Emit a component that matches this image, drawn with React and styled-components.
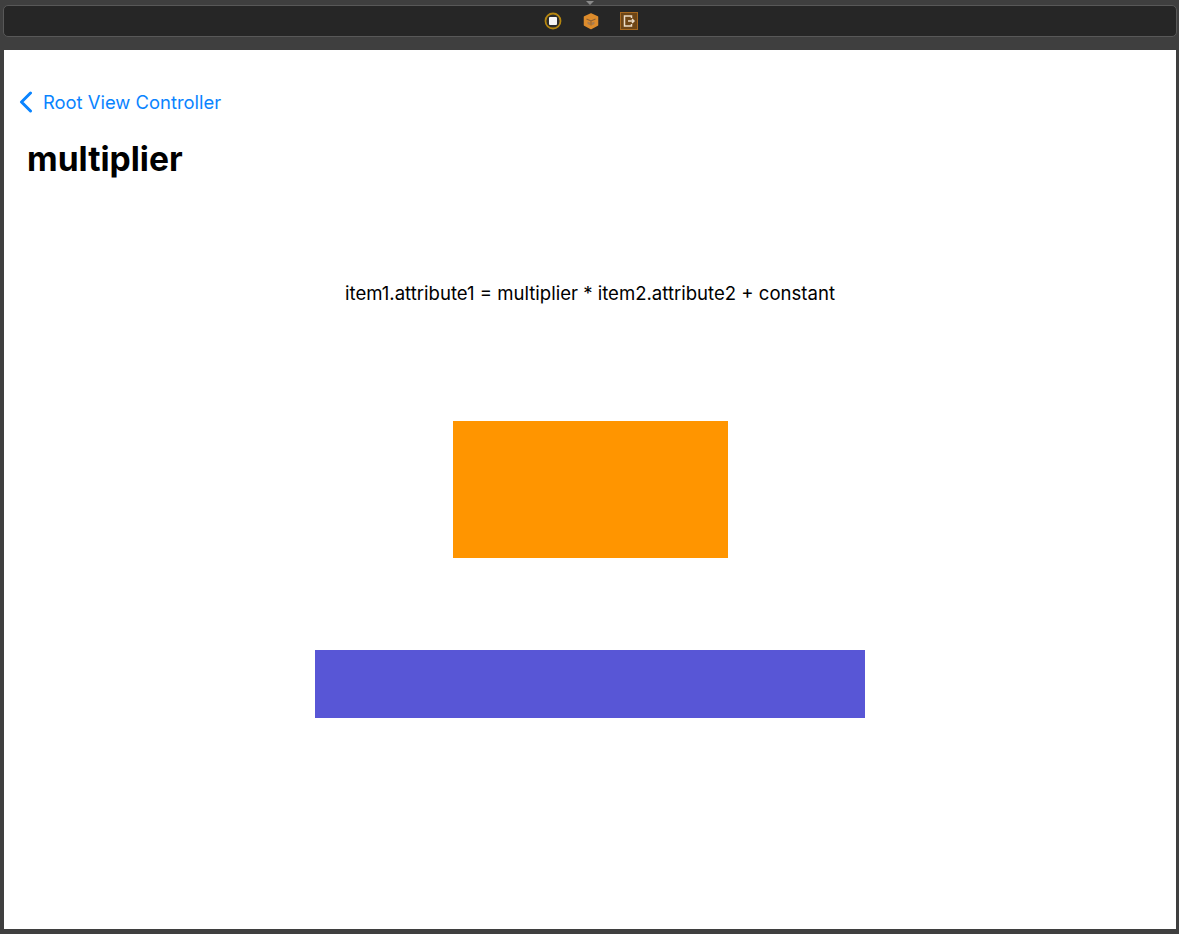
import React from 'react';
import styled, { createGlobalStyle } from 'styled-components';

const Global = createGlobalStyle`
  html, body {
    margin: 0;
    padding: 0;
    background: #3f3f3f;
  }
  body {
    font-family: Inter, "Liberation Sans", sans-serif;
  }
`;

const Window = styled.div`
  width: 1179px;
  height: 934px;
  overflow: hidden;
  background: #3f3f3f;
  padding-top: 5px;
  box-sizing: border-box;
`;

const DebugBar = styled.div`
  position: relative;
  box-sizing: border-box;
  height: 32px;
  margin: 0 2px 0 3px;
  background: #262626;
  border: 1px solid #585858;
  border-radius: 5px;
  display: flex;
  align-items: center;
  justify-content: center;
  gap: 20px;
  padding-left: 2px;
`;

const Notch = styled.div`
  position: absolute;
  top: -5px;
  left: 582px;
  width: 0;
  height: 0;
  border-left: 4px solid transparent;
  border-right: 4px solid transparent;
  border-top: 4px solid #8a8a8a;
`;

const IconSlot = styled.div`
  width: 18px;
  height: 18px;
  display: flex;
`;

const Screen = styled.div`
  box-sizing: border-box;
  height: 879px;
  margin: 13px 3px 0 4px;
  background: #fff;
  display: flex;
  flex-direction: column;
`;

const NavBar = styled.div`
  display: flex;
  align-items: center;
  gap: 9px;
  height: 24px;
  margin-top: 40px;
  padding-left: 15px;
  color: #0a84ff;
  font-size: 18.4px;
`;

const Title = styled.h1`
  margin: 26px 0 0 23px;
  height: 38px;
  line-height: 38px;
  font-size: 33.6px;
  font-weight: 700;
  color: #000;
`;

const Stage = styled.div`
  display: flex;
  flex-direction: column;
  align-items: center;
  padding-top: 103px;
`;

const Formula = styled.div`
  height: 24px;
  line-height: 24px;
  font-size: 18.57px;
  color: #000;
  white-space: nowrap;
`;

const Block = styled.div`
  width: ${(p) => p.$w}px;
  height: ${(p) => p.$h}px;
  margin-top: ${(p) => p.$top}px;
  background: ${(p) => p.$color};
`;

const StopIcon = () => (
  <svg width="18" height="18" viewBox="0 0 18 18">
    <circle cx="9" cy="9" r="7.5" fill="#2b2b2b" stroke="#b5860f" strokeWidth="1.8" />
    <rect x="5" y="5" width="8" height="8" rx="1" fill="#f5f5f5" />
  </svg>
);

const CubeIcon = () => (
  <svg width="18" height="18" viewBox="0 0 18 18">
    <path d="M9 2 15.5 5V13L9 16.5 2.5 13V5Z" fill="#dd8c2c" stroke="#dd8c2c" strokeWidth="1.5" strokeLinejoin="round" />
    <path d="M4.5 7 9 9 13.5 7M9 9V13.5" fill="none" stroke="#8a5f34" strokeWidth="1.1" />
    <path d="M5.5 9.5V12L8 13.2V10.4ZM12.5 9.5V12L10 13.2V10.4Z" fill="#a67c52" />
  </svg>
);

const ExitIcon = () => (
  <svg width="18" height="18" viewBox="0 0 18 18">
    <rect x="0.5" y="0.5" width="17" height="17" fill="#6f4616" stroke="#a8691f" />
    <path d="M11.5 6V4H4.5V14H11.5V12" fill="none" stroke="#ecdcc6" strokeWidth="1.5" />
    <path d="M8 9H14M12 7l2 2-2 2" fill="none" stroke="#ecdcc6" strokeWidth="1.4" />
  </svg>
);

const BackChevron = () => (
  <svg width="15" height="22" viewBox="0 0 15 22">
    <path d="M11.5 2 2.5 11l9 9" fill="none" stroke="#0a84ff" strokeWidth="3" strokeLinecap="round" strokeLinejoin="round" />
  </svg>
);

const App = () => {
  return (
    <Window>
      <Global />
      <DebugBar>
        <Notch />
        <IconSlot><StopIcon /></IconSlot>
        <IconSlot><CubeIcon /></IconSlot>
        <IconSlot><ExitIcon /></IconSlot>
      </DebugBar>
      <Screen>
        <NavBar>
          <BackChevron />
          <span>Root View Controller</span>
        </NavBar>
        <Title>multiplier</Title>
        <Stage>
          <Formula>item1.attribute1 = multiplier * item2.attribute2 + constant</Formula>
          <Block $w={275} $h={137} $top={116} $color="#ff9500" />
          <Block $w={550} $h={68} $top={92} $color="#5856d6" />
        </Stage>
      </Screen>
    </Window>
  );
};

export default App;
